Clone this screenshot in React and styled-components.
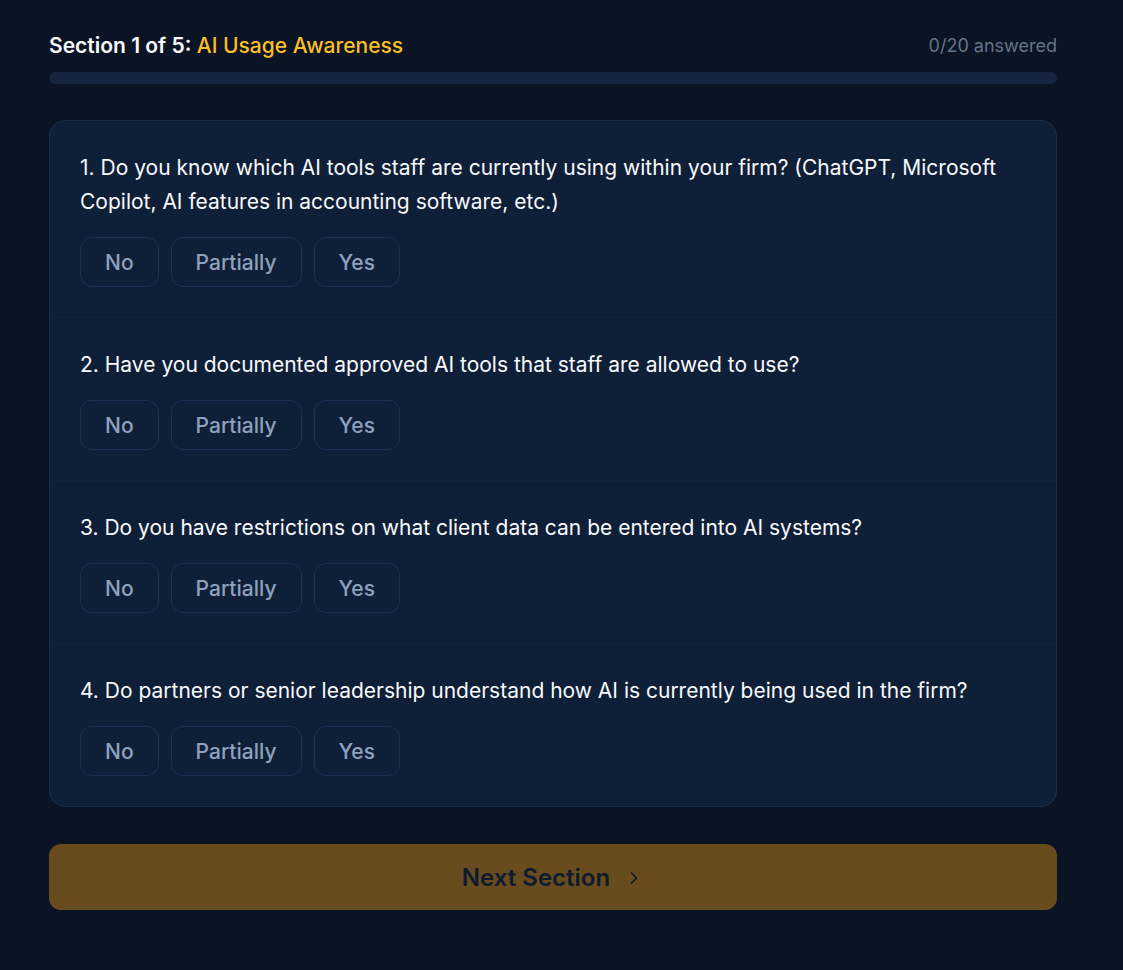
import * as React from "react";
import styled, {createGlobalStyle} from "styled-components";
import {ChevronRight} from "lucide-react";

const GlobalStyle = createGlobalStyle`
  html, body {
    margin: 0;
    padding: 0;
    background: #0a1425;
  }
  body {
    font-family: Inter, "Noto Sans", sans-serif;
    min-height: 970px;
  }
`

const Page = styled.div`
  width: 1008px;
  padding: 30px 0 40px 49px;
`
const Header = styled.div`
  display: flex;
  justify-content: space-between;
  align-items: center;
  height: 30px;
`
const Title = styled.div`
  font-size: 21px;
  font-weight: 600;
  color: #f8fafc;
  span {
    color: #fbbf24;
    font-weight: 500;
  }
`
const Count = styled.div`
  font-size: 18px;
  color: #64748b;
`
const Track = styled.div`
  margin-top: 12px;
  height: 12px;
  border-radius: 6px;
  background: #16243f;
  overflow: hidden;
`
const Fill = styled.div`
  height: 100%;
  background: #fbbf24;
`
const Card = styled.div`
  margin-top: 36px;
  background: #0f1f37;
  border: 1px solid #1c2e4c;
  border-radius: 16px;
  overflow: hidden;
`
const Question = styled.div`
  padding: 30px 31px 30px 30px;
  & + & {
    border-top: 1px solid ${p => p.$faint ? "#122340" : "#16284a"};
  }
`
const Text = styled.p`
  margin: 0;
  font-size: 21px;
  line-height: 34px;
  color: #f8fafc;
`
const Options = styled.div`
  display: flex;
  gap: 12px;
  margin-top: 18px;
`
const Option = styled.button`
  height: 50px;
  padding: 0 24px;
  border-radius: 12px;
  border: 1px solid #1d3154;
  background: ${p => p.$active ? "#fbbf24" : "#0f1f37"};
  color: ${p => p.$active ? "#0f1b2e" : "#8ea2bd"};
  font-family: inherit;
  font-size: 21px;
  font-weight: 500;
  cursor: pointer;
`
const NextButton = styled.button`
  margin-top: 37px;
  width: 100%;
  height: 66px;
  border: none;
  border-radius: 12px;
  background: #694c1d;
  color: #0f1b2e;
  font-family: inherit;
  font-size: 24px;
  font-weight: 600;
  display: flex;
  align-items: center;
  justify-content: center;
  gap: 14px;
  svg {
    margin-top: 2px;
  }
`

const questions = [
    "1. Do you know which AI tools staff are currently using within your firm? (ChatGPT, Microsoft Copilot, AI features in accounting software, etc.)",
    "2. Have you documented approved AI tools that staff are allowed to use?",
    "3. Do you have restrictions on what client data can be entered into AI systems?",
    "4. Do partners or senior leadership understand how AI is currently being used in the firm?",
]

export default function App() {
    const [answers, setAnswers] = React.useState({});
    const answered = Object.keys(answers).length;
    return (
        <Page>
            <GlobalStyle/>
            <Header>
                <Title>Section 1 of 5: <span>AI Usage Awareness</span></Title>
                <Count>{answered}/20 answered</Count>
            </Header>
            <Track><Fill style={{width: `${answered / 20 * 100}%`}}/></Track>
            <Card>
                {questions.map((q, i) => (
                    <Question key={i} $faint={i === 3}>
                        <Text>{q}</Text>
                        <Options>
                            {["No", "Partially", "Yes"].map(opt => (
                                <Option key={opt}
                                        $active={answers[i] === opt}
                                        onClick={() => setAnswers({...answers, [i]: opt})}>
                                    {opt}
                                </Option>
                            ))}
                        </Options>
                    </Question>
                ))}
            </Card>
            <NextButton>
                Next Section
                <ChevronRight size={20} strokeWidth={2}/>
            </NextButton>
        </Page>
    )
}
